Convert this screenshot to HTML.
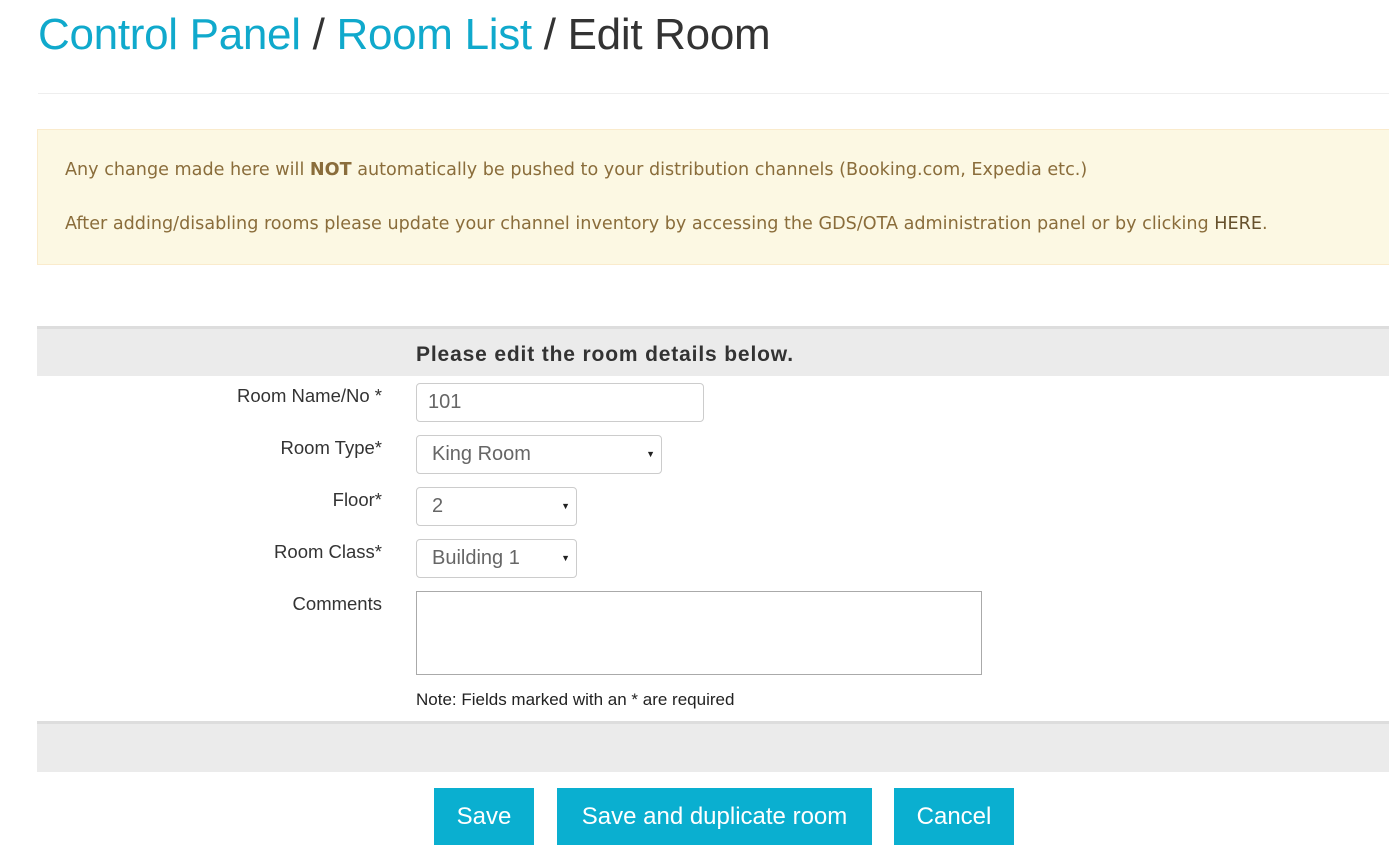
<!DOCTYPE html>
<html><head><style>
body{margin:0;background:#fff;font-family:"Liberation Sans",sans-serif;width:1389px;height:865px;overflow:hidden;position:relative}
.t{position:absolute;left:38px;top:10px;font-size:44px;color:#333;white-space:nowrap;letter-spacing:-0.3px}
.t span{color:#10a9cc}
.hr{position:absolute;left:38px;right:0;top:93px;border-top:1px solid #eee}
.al{position:absolute;left:37px;right:0;top:129px;height:134px;background:#fcf8e3;border:1px solid #faebcc;border-right:none;color:#8a6d3b;font-size:17.6px;font-family:"DejaVu Sans",sans-serif}
.al p{margin:0;position:absolute;left:27px;white-space:nowrap}
.band{position:absolute;left:37px;right:0;background:#ebebeb;border-top:3px solid #ddd}
.lbl{position:absolute;right:1007px;font-size:18.5px;color:#333;text-align:right;white-space:nowrap}
.box{position:absolute;left:416px;border:1px solid #ccc;border-radius:4px;background:#fff;box-sizing:border-box;font-size:20px;color:#666;padding-left:15px;line-height:36px}
.ar{position:absolute;right:6px;top:0;font-size:9px;color:#222}
.btn{position:absolute;top:788px;height:57px;background:#0aafd0;color:#fff;font-size:24px;line-height:57px;text-align:center}
</style></head><body>
<div class="t"><span>Control Panel</span> / <span>Room List</span> / Edit Room</div>
<div class="hr"></div>
<div class="al">
<p style="top:30px">Any change made here will <b>NOT</b> automatically be pushed to your distribution channels (Booking.com, Expedia etc.)</p>
<p style="top:84px">After adding/disabling rooms please update your channel inventory by accessing the GDS/OTA administration panel or by clicking <span style="color:#66512c">HERE</span>.</p>
</div>
<div class="band" style="top:326px;height:47px"><div style="position:absolute;left:379px;top:14px;font-size:21px;font-weight:bold;color:#333;letter-spacing:0.85px">Please edit the room details below.</div></div>
<div class="lbl" style="top:385px">Room Name/No *</div>
<div class="box" style="top:383px;width:288px;height:39px;padding-left:11px">101</div>
<div class="lbl" style="top:437px">Room Type*</div>
<div class="box" style="top:435px;width:246px;height:39px">King Room<span class="ar">▼</span></div>
<div class="lbl" style="top:489px">Floor*</div>
<div class="box" style="top:487px;width:161px;height:39px">2<span class="ar">▼</span></div>
<div class="lbl" style="top:541px">Room Class*</div>
<div class="box" style="top:539px;width:161px;height:39px">Building 1<span class="ar">▼</span></div>
<div class="lbl" style="top:593px">Comments</div>
<div class="box" style="top:591px;width:566px;height:84px;border-radius:0;border-color:#aaa"></div>
<div style="position:absolute;left:416px;top:690px;font-size:17px;color:#222">Note: Fields marked with an * are required</div>
<div class="band" style="top:721px;height:48px"></div>
<div class="btn" style="left:434px;width:100px">Save</div>
<div class="btn" style="left:557px;width:315px">Save and duplicate room</div>
<div class="btn" style="left:894px;width:120px">Cancel</div>
</body></html>
